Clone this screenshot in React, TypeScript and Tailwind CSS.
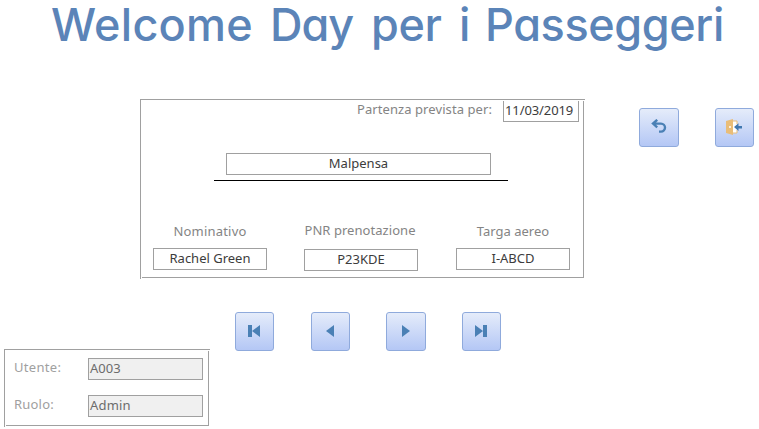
import type { ReactNode } from "react";

function Field({ children, className = "" }: { children: ReactNode; className?: string }) {
  return (
    <div className={`h-[22px] border border-[#a0a0a0] text-center leading-[19px] text-[#3c3c3c] ${className}`}>
      {children}
    </div>
  );
}

function IconButton({ label, className = "w-[39px]", children }: { label: string; className?: string; children: ReactNode }) {
  return (
    <button
      aria-label={label}
      className={`flex h-[39px] shrink-0 items-center justify-center rounded-[3px] border border-[#8faadc] bg-linear-to-b from-[#e5ecfa] to-[#b4c7f5] ${className}`}
    >
      {children}
    </button>
  );
}

function Panel({ className, children }: { className: string; children: ReactNode }) {
  return (
    <section className={`relative border border-[#a0a0a0] ${className}`}>
      {children}
      {/* etched corners: the top and left strokes run one pixel past the frame */}
      <i className="absolute -top-px -right-[2px] h-px w-px bg-[#a0a0a0]" />
      <i className="absolute top-0 -right-px h-px w-px bg-white" />
      <i className="absolute -bottom-[2px] -left-px h-px w-px bg-[#a0a0a0]" />
      <i className="absolute -bottom-px left-0 h-px w-px bg-white" />
    </section>
  );
}

export default function App() {
  return (
    <main className="h-[429px] w-[759px] bg-white font-['Noto_Sans','Open_Sans',sans-serif] text-[13px] text-[#848484]">
      <h1 className="flex h-[99px] pl-[51px] font-['Inter',sans-serif] text-[45px] leading-[49px] font-medium whitespace-nowrap text-[#5b84b8] [font-feature-settings:'cv11']">
        <span className="w-[219px] tracking-[0.25px]">Welcome</span>
        <span className="w-[101px] tracking-[-1px]">Day</span>
        <span className="w-[88px] tracking-[-0.4px]">per</span>
        <span className="w-[26px]">i</span>
        <span className="tracking-[-0.4px]">Passeggeri</span>
      </h1>

      <div className="flex h-[213px] pl-[140px]">
        <Panel className="h-[179px] w-[444px]">
          <div className="flex h-[53px] justify-end pr-[4px]">
            <span className="mr-[11px] leading-[19px] tracking-[0.08px]">Partenza prevista per:</span>
            <div className="mt-px h-[21px] w-[76px] border border-t-0 border-[#a0a0a0] pl-px leading-[18px] tracking-[-0.1px] text-[#3c3c3c]">11/03/2019</div>
          </div>
          <Field className="ml-[85px] w-[265px]">Malpensa</Field>
          <div className="mt-[5px] ml-[73px] h-px w-[294px] bg-black" />
          <div className="mt-[40px] flex gap-[38px] pl-[12px] text-center">
            <div className="w-[114px]">
              <div className="h-[27px] leading-[20px] tracking-[0.2px]">Nominativo</div>
              <Field>Rachel Green</Field>
            </div>
            <div className="-ml-px w-[114px]">
              <div className="-ml-[2px] h-[28px] leading-[18px] tracking-[0.05px] whitespace-nowrap">PNR prenotazione</div>
              <Field>P23KDE</Field>
            </div>
            <div className="w-[114px]">
              <div className="h-[27px] leading-[20px]">Targa aereo</div>
              <Field>I-ABCD</Field>
            </div>
          </div>
        </Panel>
        <div className="mt-[9px] ml-[55px] flex gap-[36px]">
          <IconButton label="Indietro" className="w-[40px]">
            <svg width="16" height="16" viewBox="0 0 16 16" className="-mt-px" fill="none" stroke="#4a80b5" strokeWidth="2.4">
              <path d="M6.2 .8 2 4.6l4.2 3.8M2 4.6H10a4 4 0 0 1 0 8H8" />
            </svg>
          </IconButton>
          <IconButton label="Esci">
            <svg width="18" height="18" viewBox="0 0 18 18" className="-mt-px -ml-px">
              <path d="M7 3h5v12H7z" fill="#fff" />
              <path d="M7 3h5v3M7 15h5v-3" fill="none" stroke="#e9bd78" />
              <path d="m1 3 7-2v16l-7-2z" fill="#e9bd78" />
              <circle cx="5" cy="9" r="1" fill="#fff" />
              <path d="m9 9 4.5-3.8V8H17v2.4h-3.5v2.6z" fill="#4078b0" />
            </svg>
          </IconButton>
        </div>
      </div>

      <nav className="flex h-[37px] pl-[235px]">
        <IconButton label="Primo" className="w-[39px] pr-[1px]">
          <svg width="14" height="14" viewBox="0 0 14 14" className="-mt-[2px]" fill="#4a80b5"><path d="M1 1h4v12H1zM13 1v12L5 7z" /></svg>
        </IconButton>
        <IconButton label="Precedente" className="ml-[37px] w-[39px] pr-[2px]">
          <svg width="14" height="14" viewBox="0 0 14 14" className="-mt-px" fill="#4a80b5"><path d="M11 1v12L3 7z" /></svg>
        </IconButton>
        <IconButton label="Successivo" className="ml-[36px] w-[40px]">
          <svg width="14" height="14" viewBox="0 0 14 14" className="-mt-px" fill="#4a80b5"><path d="M3 1v12l8-6z" /></svg>
        </IconButton>
        <IconButton label="Ultimo" className="ml-[36px] w-[39px] pr-[1px]">
          <svg width="14" height="14" viewBox="0 0 14 14" className="-mt-px" fill="#4a80b5"><path d="M1 1v12l8-6zM9 1h4v12H9z" /></svg>
        </IconButton>
      </nav>

      <Panel className="ml-[4px] h-[77px] w-[205px] pt-[8px] pl-[9px] text-[#a0a0a0]">
        <div className="flex h-[37px]">
          <span className="w-[74px] leading-[19px] tracking-[0.3px]">Utente:</span>
          <div className="h-[22px] w-[115px] border border-[#a0a0a0] bg-[#f0f0f0] pl-px leading-[19px] text-[#6c6c6c]">A003</div>
        </div>
        <div className="flex">
          <span className="w-[74px] leading-[19px] tracking-[0.2px]">Ruolo:</span>
          <div className="h-[22px] w-[115px] border border-[#a0a0a0] bg-[#f0f0f0] pl-px leading-[19px] tracking-[0.2px] text-[#6c6c6c]">Admin</div>
        </div>
      </Panel>
    </main>
  );
}
